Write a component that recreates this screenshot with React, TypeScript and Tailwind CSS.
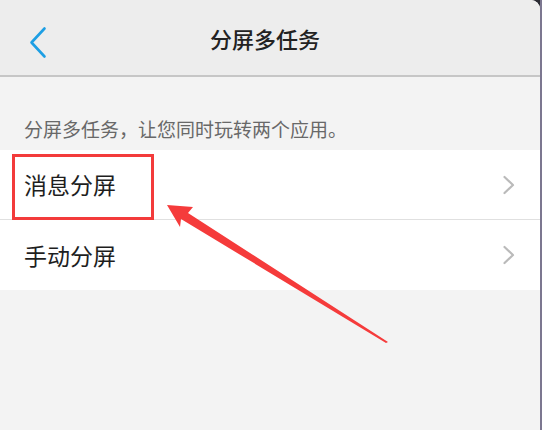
import React from "react";

const cjk = { fontFamily: '"Noto Sans CJK SC", "Noto Sans", sans-serif' };

const Chevron = () => (
  <svg width="14" height="20" viewBox="0 0 14 20" fill="none">
    <path d="M2.5 2 L11 10 L2.5 18" stroke="#bababa" strokeWidth="2.2" strokeLinecap="round" strokeLinejoin="round" />
  </svg>
);

const Row = ({ label, last }: { label: string; last?: boolean }) => (
  <div className={`h-[70px] flex items-center justify-between pl-[24px] pr-[24px] ${last ? "" : "border-b border-[#e0e0e0]"}`}>
    <span className="text-[23px] text-[#1e1e1e]">{label}</span>
    <Chevron />
  </div>
);

export default function App() {
  return (
    <div className="relative w-[542px] h-[430px] flex bg-[#2b2b33] overflow-hidden" style={cjk}>
      <div className="w-[540px] h-full bg-[#f3f3f3] rounded-tr-[9px] overflow-hidden flex flex-col">
        {/* Header */}
        <div className="h-[77px] shrink-0 bg-[#ededed] border-b-2 border-[#c6c6c6] flex items-center relative">
          <svg className="absolute left-[28px] top-[26px]" width="20" height="33" viewBox="0 0 20 33" fill="none">
            <path d="M16.5 2.5 L3.5 16.5 L16.5 30.5" stroke="#1d9fe4" strokeWidth="2.6" strokeLinecap="round" strokeLinejoin="round" />
          </svg>
          <div className="w-full text-center text-[22px] font-medium text-[#222] pr-[10px] leading-[28px]">分屏多任务</div>
        </div>

        {/* Description */}
        <div className="h-[73px] shrink-0 pt-[42px] pl-[24px] text-[19px] leading-[20px] text-[#686868]">
          分屏多任务，让您同时玩转两个应用。
        </div>

        {/* List */}
        <div className="bg-white">
          <Row label="消息分屏" />
          <Row label="手动分屏" last />
        </div>
      </div>
      <div className="w-[2px] h-full bg-[#7c7790]" />

      {/* annotation */}
      <div className="absolute left-[12px] top-[154px] w-[142px] h-[66px] border-[3px] border-[#f33b3b]" />
      <svg className="absolute left-0 top-0 pointer-events-none" width="542" height="430" viewBox="0 0 542 430">
        <polygon
          points="167,205 193,207 188,213 388,342 386,343 181,219 180,227"
          fill="#f53b3b"
        />
      </svg>
    </div>
  );
}
